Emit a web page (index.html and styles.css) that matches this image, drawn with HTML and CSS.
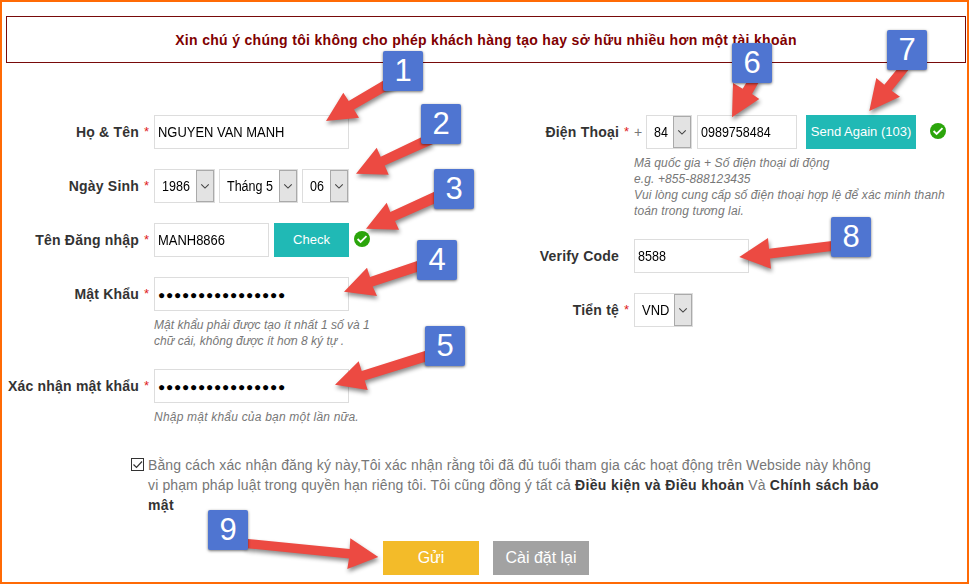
FILE: index.html
```html
<!DOCTYPE html>
<html lang="vi">
<head>
<meta charset="utf-8">
<title>Đăng ký</title>
<link rel="stylesheet" href="styles.css">
</head>
<body>
<svg class="defs" width="0" height="0">
  <symbol id="chev" viewBox="0 0 16 32"><path d="M4 14.2l4 4 4-4" fill="none" stroke="#444" stroke-width="1.2"/></symbol>
  <symbol id="ok" viewBox="0 0 16 16"><circle cx="8" cy="8" r="8" fill="#2ba50b"/><path d="M3.6 8l3 3 5.9-5.9" fill="none" stroke="#fff" stroke-width="1.8"/></symbol>
</svg>
<main class="frame">
  <div class="notice"><span>Xin chú ý chúng tôi không cho phép khách hàng tạo hay sở hữu nhiều hơn một tài khoản</span></div>
  <form class="columns">
    <section class="col left">
      <div class="row"><label>Họ &amp; Tên</label><i class="req">*</i>
        <div class="fields"><div class="input wide"><span class="caps">NGUYEN VAN MANH</span></div></div></div>
      <div class="row"><label>Ngày Sinh</label><i class="req">*</i>
        <div class="fields">
          <div class="select year"><span>1986</span><b><svg><use href="#chev"/></svg></b></div>
          <div class="select month"><span>Tháng 5</span><b><svg><use href="#chev"/></svg></b></div>
          <div class="select day"><span>06</span><b><svg><use href="#chev"/></svg></b></div>
        </div></div>
      <div class="row"><label>Tên Đăng nhập</label><i class="req">*</i>
        <div class="fields"><div class="input mid"><span class="caps">MANH8866</span></div><div class="btn check">Check</div><svg class="ok"><use href="#ok"/></svg></div></div>
      <div class="row"><label>Mật Khẩu</label><i class="req">*</i>
        <div class="fields"><div class="input wide"><span class="dots">●●●●●●●●●●●●●●●●</span></div></div>
        <p class="hint tight">Mật khẩu phải được tạo ít nhất 1 số và 1<br>chữ cái, không được ít hơn 8 ký tự .</p></div>
      <div class="row"><label>Xác nhận mật khẩu</label><i class="req">*</i>
        <div class="fields"><div class="input wide"><span class="dots">●●●●●●●●●●●●●●●●</span></div></div>
        <p class="hint loose">Nhập mật khẩu của bạn một lần nữa.</p></div>
    </section>
    <section class="col right">
      <div class="row"><label>Điện Thoại</label><i class="req">*</i>
        <div class="fields"><span class="plus">+</span>
          <div class="select code"><span>84</span><b><svg><use href="#chev"/></svg></b></div>
          <div class="input num"><span>0989758484</span></div>
          <div class="btn send">Send Again (103)</div><svg class="ok"><use href="#ok"/></svg></div>
        <p class="hint">Mã quốc gia + Số điện thoại di động<br>e.g. +855-888123435<br>Vui lòng cung cấp số điện thoại hợp lệ để xác minh thanh<br>toán trong tương lai.</p></div>
      <div class="row"><label>Verify Code</label><i class="req"></i>
        <div class="fields"><div class="input mid"><span>8588</span></div></div></div>
      <div class="row"><label>Tiển tệ</label><i class="req">*</i>
        <div class="fields"><div class="select cur"><span class="caps">VND</span><b><svg><use href="#chev"/></svg></b></div></div></div>
    </section>
  </form>
  <div class="agree">
    <svg class="box" viewBox="0 0 13 13"><rect x=".5" y=".5" width="12" height="12" fill="#fff" stroke="#333"/><path d="M2.5 6.5l3 3 5.5-6" fill="none" stroke="#333" stroke-width="1.2"/></svg>
    <p>Bằng cách xác nhận đăng ký này,Tôi xác nhận rằng tôi đã đủ tuổi tham gia các hoạt động trên Webside này không<br>vi phạm pháp luật trong quyền hạn riêng tôi. Tôi cũng đồng ý tất cả <strong>Điều kiện và Điều khoản</strong> Và <strong>Chính sách bảo</strong><br><strong>mật</strong></p>
  </div>
  <div class="actions"><div class="btn submit">Gửi</div><div class="btn reset">Cài đặt lại</div></div>
</main>
<svg class="arrows" viewBox="0 0 969 584">
  <path d="M326 121L343.3 92.7L348.7 101L386 79L395 86L354 109.5L359 117.7Z"/>
  <path d="M356 173.7L376.7 147.7L380.7 156.7L424 136L433 144L384.7 165.5L388.7 174.7Z"/>
  <path d="M366 228.7L386.7 202.7L390.3 212L437 190.5V202.5L395 221L399 229.7Z"/>
  <path d="M344 291.7L367 267.7L370 277L420 260V271L372.7 286.5L377 296Z"/>
  <path d="M335 384.7L358.7 361.3L361.7 371L428 350V361L364.7 380.5L367.7 390Z"/>
  <path d="M732 117.3L733 83L742.7 88.7L748 80H760L752 94L759.3 99Z"/>
  <path d="M869.3 111L876.3 78L884.3 84.7L898 68H910L891.7 90.7L900 96.7Z"/>
  <path d="M739.3 257L768 238L769 248.7L834 240.8V250.8L770 258.6L771 268.7Z"/>
  <path d="M378.3 557L350.3 538.3L349.7 549L245 538.7V548L349 558.5L347.3 569Z"/>
</svg>
<div class="mark m1">1</div><div class="mark m2">2</div><div class="mark m3">3</div>
<div class="mark m4">4</div><div class="mark m5">5</div><div class="mark m6">6</div>
<div class="mark m7">7</div><div class="mark m8">8</div><div class="mark m9">9</div>
</body>
</html>
```
FILE: styles.css
```css
* { box-sizing: border-box; }
body { margin: 0; width: 969px; height: 584px; overflow: hidden; position: relative; font: 14px/20px "Liberation Sans", Arial, sans-serif; color: #333; background: #fff; }
.defs { position: absolute; }
.frame { height: 584px; border: 2px solid #ff6a05; padding: 14px 1px 0 4px; }
.notice { height: 47px; border: 1px solid #780a0a; display: flex; align-items: center; justify-content: center; color: #800000; font-weight: bold; white-space: nowrap; letter-spacing: .31px; }
.columns { display: flex; height: 341px; padding-top: 52px; }
.col { display: flex; flex-direction: column; gap: 20px; }
.left { width: 480px; flex: none; }
.row { display: grid; grid-template-columns: 133px 15px 1fr; grid-template-rows: 34px auto; }
.right .row { grid-template-columns: 133px 15px 320px; }
.row label { text-align: right; font-weight: bold; line-height: 34px; white-space: nowrap; letter-spacing: .2px; }
.req { font-style: normal; color: #e02020; font-size: 13px; line-height: 34px; padding-left: 5px; }
.fields { display: flex; align-items: center; color: #000; white-space: nowrap; }
.hint { grid-column: 3; margin: 6px 0 0; font: italic 12px/16px "Liberation Sans", Arial, sans-serif; color: #777; white-space: nowrap; letter-spacing: .11px; }
.tight { letter-spacing: .02px; }
.loose { letter-spacing: .21px; }
.input, .select { height: 34px; border: 1px solid #ddd; background: #fff; display: flex; align-items: center; }
.input { padding-left: 3px; }
.input span, .select span { transform: scaleX(.895); transform-origin: 0 50%; }
.input .caps, .select .caps { transform: scaleX(.925); }
.input .dots { transform: none; font-size: 12px; letter-spacing: .75px; padding-top: 1px; }
.wide { width: 195px; }
.mid { width: 115px; }
.num { width: 100px; margin-left: 5px; }
.select { justify-content: space-between; padding-left: 7px; }
.select b { width: 18px; height: 32px; flex: none; background: #e3e3e3; border: 1px solid #aaa; display: block; }
.select span { width: 0; }
.select svg { display: block; width: 16px; height: 30px; }
.year { width: 61px; margin-right: 4px; }
.month { width: 79px; margin-right: 4px; }
.day { width: 47px; }
.code { width: 46px; }
.cur { width: 59px; }
.plus { color: #777; width: 12px; }
.right { padding-left: 0; }
.btn { height: 34px; background: #20b9b5; color: #fff; display: flex; align-items: center; justify-content: center; }
.check { width: 75px; margin-left: 5px; font-size: 13px; }
.send { width: 110px; margin-left: 9px; font-size: 13px; }
.ok { width: 16px; height: 16px; margin-left: 5px; margin-bottom: 2px; flex: none; }
.send + .ok { margin-left: 14px; }
.agree { display: flex; margin-left: 125px; margin-top: 51px; color: #777; white-space: nowrap; }
.agree p { margin: 0 0 0 4px; letter-spacing: .125px; }
.agree strong { color: #333; letter-spacing: .36px; }
.box { width: 13px; height: 13px; margin-top: 3px; }
.actions { display: flex; gap: 14px; margin: 26px 0 0 377px; font-size: 16px; }
.submit { width: 96px; background: #f3bb29; }
.reset { width: 96px; background: #a2a2a2; }
.arrows { position: absolute; left: 0; top: 0; width: 969px; height: 584px; fill: #ec4a42; filter: drop-shadow(1px 3px 2px rgba(0,0,0,.45)); }
.mark { position: absolute; width: 40px; height: 40px; border-radius: 2px; background: #4f75d1; color: #fff; font: 31px/39px "Liberation Sans", sans-serif; text-align: center; box-shadow: 0 1px 3px rgba(0,0,0,.55); }
.m1 { left: 383px; top: 51px; }
.m2 { left: 421px; top: 104px; }
.m3 { left: 434px; top: 169px; }
.m4 { left: 417px; top: 240px; }
.m5 { left: 425px; top: 326px; }
.m6 { left: 732px; top: 43px; }
.m7 { left: 887px; top: 30px; }
.m8 { left: 831px; top: 217px; }
.m9 { left: 208px; top: 510px; }
```
